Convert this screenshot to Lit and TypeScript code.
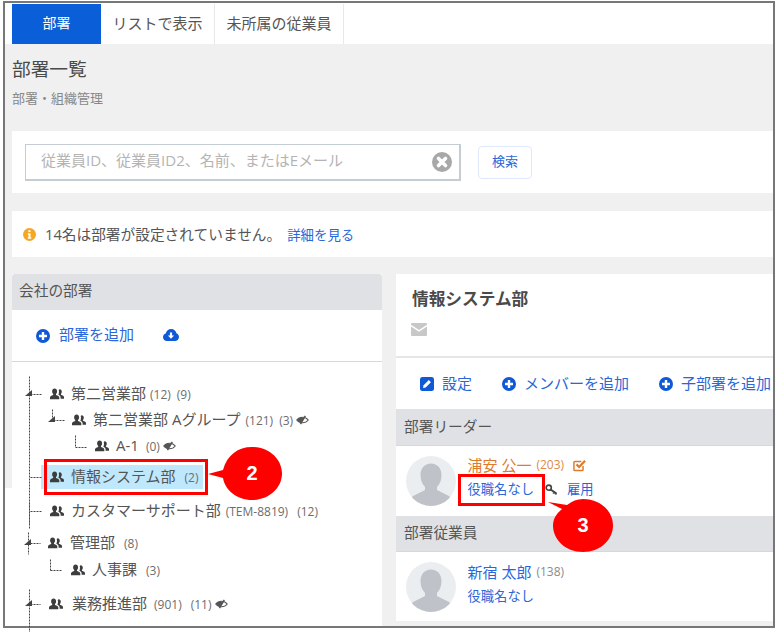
import { LitElement, html, css, svg } from "lit";
import { customElement } from "lit/decorators.js";

const users = html`<svg class="users" viewBox="0 0 14 12" width="14" height="12"><path fill="#3d3d3d" d="M4.600.6c1.500 0 2.500 1.200 2.500 2.800 0 1.100-.4 2-1.100 2.600v.9c1.900.5 3.300 1.300 3.300 2.600v1.800H0V9.500c0-1.300 1.300-2.100 3.200-2.600V6C2.500 5.400 2.100 4.500 2.100 3.400 2.100 1.800 3.100.6 4.600.6z"/><path fill="#3d3d3d" d="M9.800 1.300c1.200 0 2 1 2 2.400 0 1-.3 1.800-.9 2.300v.8c1.700.4 3.100 1.200 3.100 2.400v1.600h-3.400V9.300c0-1-.8-1.900-2.200-2.600.3-.8.600-1.800.6-3 0-.6-.1-1.100-.3-1.500.2-.5.600-.9 1.100-.9z"/></svg>`;
const eye = html`<svg class="eye" viewBox="0 0 14 10" width="13" height="10"><path fill="none" stroke="#555" stroke-width="1.200" d="M.8 5C3.800 1 10.200 1 13.200 5 10.200 9 3.800 9 .8 5z"/><path fill="#555" d="M.8 5C2 3.400 3.800 2.400 5.800 2.200L8.500 3.300 5.400 8C3.500 7.700 2 6.600.8 5z"/><path stroke="#555" stroke-width="1.600" d="M4.800 9.400 10 .6"/></svg>`;
const plus = html`<svg class="ico" viewBox="0 0 14 14" width="14" height="14"><circle cx="7" cy="7" r="7" fill="#0f58d6"/><path fill="#fff" d="M5.800 3h2.400v2.800H11v2.400H8.200V11H5.800V8.200H3V5.800h2.800z"/></svg>`;
const avatar = html`<svg class="avatar" viewBox="0 0 50 50" width="50" height="50"><circle cx="25" cy="25" r="25" fill="#ebeef1"/><clipPath id="av"><circle cx="25" cy="25" r="25"/></clipPath><g clip-path="url(#av)" fill="#bfc3c9"><path d="M25 7.500c6.500 0 10.500 5 10.500 11.500 0 5-1.500 9-4.500 12v3l12 6c1.500 1 2.500 3 3 10H4c.5-7 1.500-9 3-10l12-6v-3c-3-3-4.500-7-4.500-12C14.500 12.500 18.500 7.500 25 7.500z"/></g></svg>`;

interface TreeNode { top: number; indent: number; name: string; first: number; next?: number; iconGap?: number; meta: string[]; eye?: boolean; sel?: boolean }
const nodes: TreeNode[] = [
  { top: 20, indent: 38, name: "第二営業部", first: 4, meta: ["(12)", "(9)"] },
  { top: 2, indent: 60, name: "第二営業部 Aグループ", first: 5, meta: ["(121)", "(3)"], eye: true },
  { top: 2, indent: 83, name: "A-1", first: 7, meta: ["(0)"], eye: true },
  { top: 7, indent: 29, name: "情報システム部", first: 9, meta: ["(2)"], sel: true },
  { top: 10, indent: 38, name: "カスタマーサポート部", first: 5, next: 9, meta: ["(TEM-8819)", "(12)"] },
  { top: 8, indent: 36, name: "管理部", first: 9, iconGap: 8, meta: ["(8)"] },
  { top: 3, indent: 59, name: "人事課", first: 9, iconGap: 7, meta: ["(3)"] },
  { top: 10, indent: 37, name: "業務推進部", first: 7, next: 9, iconGap: 9, meta: ["(901)", "(11)"], eye: true },
];

// connector segments in tree coordinates: [x1, y1, x2, y2]
const lines = [
  [17, 14, 17, 166], [18, 32, 30, 32],
  [40, 47, 40, 59], [41, 58, 52, 58],
  [63, 73, 63, 85], [63, 85, 75, 85],
  [18, 115, 29, 115], [17, 140, 17, 162], [18, 149, 30, 149],
  [16, 170, 16, 192], [18, 181, 28, 181],
  [38, 197, 38, 208], [38, 208, 50, 208],
  [17, 227, 17, 270], [18, 242, 28, 242],
];
const tris = [[17, 32], [40, 58], [16, 181], [17, 242]];

@customElement("app-root")
export class AppRoot extends LitElement {
  static styles = css`
    :host { display: block; position: relative; width: 776px; height: 632px; background: #fff; overflow: hidden;
      font-family: "Open Sans", "Noto Sans CJK JP", sans-serif; color: #555; }
    .frame { box-sizing: border-box; position: relative; margin: 1px 0 0 3px; width: 772px; height: 627px; border: 2px solid #777; background: #f0f0f0; display: flex; flex-direction: column; }
    .tabs { display: flex; background: #fff; padding: 1px 0 0 7px; height: 40px; flex: none; }
    .tab { display: flex; align-items: center; justify-content: center; box-sizing: border-box; font-size: 15px; padding-bottom: 4px; border-right: 1px solid #e8e8e8; }
    .tab.on { width: 89px; background: #0a5fd8; color: #fff; font-size: 14px; border: none; }
    .tab.mid { width: 114px; }
    .tab.last { width: 129px; }
    .head { padding: 14px 0 24px 7px; flex: none; height: 87px; box-sizing: border-box; }
    h1 { margin: 0; font-weight: 400; font-size: 18.700px; line-height: 22px; color: #4a4a4a; }
    .sub { margin-top: 9px; font-size: 13px; line-height: 18px; color: #888; }
    .card { background: #fff; margin-left: 7px; display: flex; align-items: center; flex: none; }
    .search { height: 62px; padding-left: 13px; margin-bottom: 18px; }
    .input { box-sizing: border-box; width: 436px; height: 37px; border: 1px solid #c4cdd4; border-bottom-width: 2px; border-right-width: 2px; display: flex; align-items: center; justify-content: space-between; padding: 0 7px 0 15px; color: #b4b4b4; font-size: 15px; }
    .input span { padding-bottom: 4px; }
    .btn { box-sizing: border-box; margin-left: 17px; width: 54px; height: 33px; border: 1.500px solid #dfe8fb; border-radius: 4px; display: flex; align-items: center; justify-content: center; font-size: 13px; color: #2b66d9; padding-bottom: 4px; }
    .notice { height: 46px; padding-left: 11px; margin-bottom: 17px; font-size: 14.700px; gap: 9px; }
    .notice span { padding-bottom: 1px; }
    a { color: #2b66d9; text-decoration: none; }
    .notice a { margin-left: -3px; font-size: 13.400px; }
    .main { flex: 1; display: flex; min-height: 0; }
    .gutter { width: 7px; flex: none; background: linear-gradient(#f0f0f0 214px, #fff 214px); }
    .left { width: 370px; flex: none; background: #fff; display: flex; flex-direction: column; }
    .lhead { height: 36px; background: #dfe1e5; border-radius: 3px 3px 0 0; display: flex; align-items: center; box-sizing: border-box; padding: 0 0 5px 7px; font-size: 14.700px; flex: none; }
    .ladd { height: 51px; flex: none; border-bottom: 1px solid #d8d8d8; display: flex; align-items: center; padding-left: 24px; font-size: 15px; color: #2b66d9; }
    .ladd span { padding-bottom: 4px; }
    .ladd .ico { margin-right: 9px; }
    .ladd svg.cloud { margin: 0 0 2px 29px; }
    .tree { position: relative; flex: 1; }
    .tree > svg { position: absolute; left: 0; top: 0; overflow: visible; }
    .row { display: flex; align-items: center; height: 24px; font-size: 15px; color: #555; width: max-content; }
    .row.sel { background: #bfe8fd; padding: 0 4px 0 9px; width: 149px; }
    .row .users { flex: none; }
    .row .nm { padding-bottom: 3px; }
    .row .m { font-size: 12px; color: #6d6d6d; }
    .row .eye { margin-left: 3px; }
    .right { margin: 0 0 5px 14px; flex: 1; background: #fff; display: flex; flex-direction: column; overflow: hidden; }
    .rhead { height: 84px; box-sizing: border-box; border-bottom: 2px solid #e6e6e6; padding: 14px 0 0 16px; flex: none; }
    .rhead h2 { margin: 0 0 13px; font-size: 16.700px; line-height: 22px; font-weight: 700; color: #4a4a4a; }
    .rhead svg { display: block; margin-left: -1px; }
    .acts { height: 51px; flex: none; display: flex; align-items: center; padding-left: 24px; font-size: 15px; color: #2b66d9; white-space: nowrap; }
    .acts .ico { margin-right: 8px; flex: none; }
    .acts span { margin-right: 30px; padding-bottom: 3px; }
    .sec { height: 37px; box-sizing: border-box; background: #dfe1e5; border-bottom: 1px solid #d6d8dc; display: flex; align-items: center; padding: 0 0 4px 8px; font-size: 14.700px; flex: none; }
    .sec.b { height: 36px; }
    .member { height: 70px; box-sizing: border-box; flex: none; display: flex; align-items: center; padding-left: 10px; gap: 11.500px; }
    .member .txt { align-self: flex-start; padding-top: 7px; font-size: 13.300px; line-height: 24px; color: #2b66d9; }
    .member.two .txt { padding-top: 8px; }
    .name { display: flex; align-items: center; font-size: 15px; white-space: nowrap; }
    .name small { font-size: 12px; margin-left: 5px; color: #8a8a8a; }
    .name.o { color: #e07b2d; }
    .name.o small { color: #e08a48; }
    .name.o svg { margin-left: 9px; }
    .title { display: flex; align-items: center; }
    .title svg { margin: 0 9px 0 11px; }
    .mark { position: absolute; box-sizing: border-box; border: 3px solid #f00; }
    .mark.a { left: 44px; top: 459px; width: 164px; height: 36px; }
    .mark.b { left: 458px; top: 474px; width: 87px; height: 32px; }
    .bubble { position: absolute; display: flex; align-items: center; justify-content: center; color: #fff; font: 700 20px "Liberation Sans", sans-serif; }
    .bubble svg { position: absolute; left: 0; top: 0; overflow: visible; }
    .bubble span { position: relative; }
    .bubble.a { left: 222px; top: 447px; width: 60px; height: 53px; }
    .bubble.b { left: 553px; top: 499px; width: 60px; height: 53px; }
  `;

  render() {
    return html`
      <div class="frame">
        <div class="tabs">
          <div class="tab on">部署</div>
          <div class="tab mid">リストで表示</div>
          <div class="tab last">未所属の従業員</div>
        </div>
        <div class="head">
          <h1>部署一覧</h1>
          <div class="sub">部署・組織管理</div>
        </div>
        <div class="card search">
          <div class="input">
            <span>従業員ID、従業員ID2、名前、またはEメール</span>
            <svg viewBox="0 0 20 20" width="20" height="20"><circle cx="10" cy="10" r="10" fill="#a8a8a8"/><path stroke="#fff" stroke-width="3.600" stroke-linecap="round" d="M6.500 6.500l7 7M13.500 6.500l-7 7"/></svg>
          </div>
          <div class="btn">検索</div>
        </div>
        <div class="card notice">
          <svg viewBox="0 0 14 14" width="13" height="13"><circle cx="7" cy="7" r="7" fill="#f5a623"/><path fill="#fff" d="M5.800 2.400h2.300v2H5.800zM5.200 5.600h2.900v4.300h.8v1.600H5.200V9.900H6V7.200h-.8z"/></svg>
          <span>14名は部署が設定されていません。</span>
          <a>詳細を見る</a>
        </div>
        <div class="main">
          <div class="gutter"></div>
          <div class="left">
            <div class="lhead">会社の部署</div>
            <div class="ladd">
              ${plus}<span>部署を追加</span>
              <svg class="cloud" viewBox="0 0 16 12" width="16" height="12"><path fill="#0f58d6" d="M4 12C1.800 12 0 10.300 0 8.200c0-1.700 1.100-3.100 2.700-3.600C3.300 2 5.500 0 8.200 0c2.600 0 4.700 1.700 5.200 4.200 1.500.6 2.600 2 2.600 3.700 0 2.300-1.900 4.100-4.200 4.100z"/><path fill="#fff" d="M6.900 3.500h2.200v3h2L8 9.700 4.900 6.500h2z"/></svg>
            </div>
            <div class="tree">
              <svg width="90" height="270">
                ${lines.map(([a, b, c, d]) => svg`<line x1=${a + 0.5} y1=${b + 0.5} x2=${c + 0.5} y2=${d + 0.5} stroke="#444" stroke-width="1" stroke-dasharray="2 1"/>`)}
                ${tris.map(([x, y]) => svg`<path d="M${x - 4} ${y + 2}h7v-6z" fill="#444"/>`)}
              </svg>
              ${nodes.map(
                (n) => html`<div class="row ${n.sel ? "sel" : ""}" style="margin:${n.top}px 0 0 ${n.indent}px">
                  ${users}<span class="nm" style="margin-left:${n.iconGap ?? 7}px">${n.name}</span>
                  ${n.meta.map((m, i) => html`<span class="m" style="margin-left:${i === 0 ? n.first : n.next ?? 6}px">${m}</span>`)}
                  ${n.eye ? eye : ""}
                </div>`
              )}
            </div>
          </div>
          <div class="right">
            <div class="rhead">
              <h2>情報システム部</h2>
              <svg viewBox="0 0 16 13" width="16" height="13"><path fill="#c8c8c8" d="M1 0h14a1 1 0 0 1 1 1v.8L8 7 0 1.800V1a1 1 0 0 1 1-1zM0 3.600 8 8.800l8-5.200V12a1 1 0 0 1-1 1H1a1 1 0 0 1-1-1z"/></svg>
            </div>
            <div class="acts">
              <svg class="ico" viewBox="0 0 14 14" width="14" height="14"><rect width="14" height="14" rx="2.500" fill="#0f58d6"/><path fill="#fff" d="M3 11l.6-2.700L8.800 3.100l2.100 2.100-5.200 5.200z"/></svg><span>設定</span>
              ${plus}<span>メンバーを追加</span>
              ${plus}<span>子部署を追加</span>
            </div>
            <div class="sec">部署リーダー</div>
            <div class="member">
              ${avatar}
              <div class="txt">
                <div class="name o">浦安 公一<small>(203)</small>
                  <svg viewBox="0 0 14 14" width="13" height="13"><path fill="none" stroke="#e07b2d" stroke-width="1.600" d="M10.800 7.500v4a1 1 0 0 1-1 1H2a1 1 0 0 1-1-1V3.700a1 1 0 0 1 1-1h7"/><path fill="none" stroke="#e07b2d" stroke-width="2.400" d="M3.800 5.800l2.800 2.800L13 1.800"/></svg>
                </div>
                <div class="title"><span>役職名なし</span>
                  <svg viewBox="0 0 14 12" width="13" height="11"><circle cx="4" cy="4" r="2.800" fill="none" stroke="#444" stroke-width="1.800"/><path stroke="#444" stroke-width="2" fill="none" d="M6 6l6.500 4.500M10 8.500 9 10.500M12 10l-.8 1.500"/></svg>
                  <span>雇用</span>
                </div>
              </div>
            </div>
            <div class="sec b">部署従業員</div>
            <div class="member two">
              ${avatar}
              <div class="txt">
                <div class="name">新宿 太郎<small>(138)</small></div>
                <div class="title"><span>役職名なし</span></div>
              </div>
            </div>
          </div>
        </div>
      </div>
      <div class="mark a"></div>
      <div class="mark b"></div>
      <div class="bubble a">
        <svg width="60" height="53"><path fill="#f00" d="M1 23C5 8 16 0 30 0c17 0 30 12 30 26.500S47 53 30 53C15 53 3 43 1 31l-15-4z"/></svg>
        <span>2</span>
      </div>
      <div class="bubble b">
        <svg width="60" height="53"><path fill="#f00" d="M9 10 -5 3 14 6C19 2 24 0 30 0c17 0 30 12 30 26.500S47 53 30 53 0 41 0 26.500C0 20 3 15 9 10z"/></svg>
        <span>3</span>
      </div>
    `;
  }
}
